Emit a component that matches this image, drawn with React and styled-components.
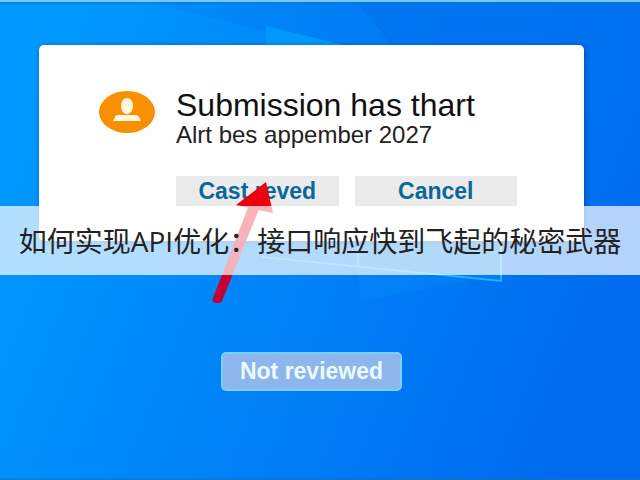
import React from 'react'
import styled, { createGlobalStyle, css } from 'styled-components'

function App() {
  return (
    <>
      <GlobalStyle />
      <Desktop>
        <Wallpaper />
        <Dialog role="dialog" aria-labelledby="dialog-title" aria-describedby="dialog-text">
          <UserIcon />
          <Content>
            <Title id="dialog-title">Submission has thart</Title>
            <Message id="dialog-text">Alrt bes appember 2027</Message>
            <Actions>
              <Button type="button">Cast reved</Button>
              <Button type="button">Cancel</Button>
            </Actions>
          </Content>
        </Dialog>
        <Button type="button" outlined>Not reviewed</Button>
        <Arrow />
        <Banner>
          <Headline>如何实现API优化：接口响应快到飞起的秘密武器</Headline>
        </Banner>
      </Desktop>
    </>
  )
}

export default App

function Wallpaper() {
  return (
    <WallpaperSvg viewBox="0 0 640 480" preserveAspectRatio="none" aria-hidden="true">
      <defs>
        <linearGradient id="sky" x1="0" y1="0.3" x2="1" y2="0.6">
          <stop offset="0" stopColor="#0099ff" />
          <stop offset="0.45" stopColor="#0084f8" />
          <stop offset="1" stopColor="#006aee" />
        </linearGradient>
        <linearGradient id="beam" x1="0" y1="0" x2="1" y2="0">
          <stop offset="0" stopColor="#0084f6" stopOpacity="0.3" />
          <stop offset="1" stopColor="#007af4" />
        </linearGradient>
      </defs>
      <rect width="640" height="480" fill="url(#sky)" />
      <path d="M140 0H355L405 55H350L266 32Z" fill="url(#beam)" />
      <path d="M355 0H640V60H405Z" fill="#0070ee" opacity="0.7" />
      <path d="M266 26L355 48H266Z" fill="#0099fb" />
      <path d="M358 240H502V281L358 266Z" fill="#0080ee" />
      <path d="M358 266L470 281L360 301Z" fill="#0890fb" opacity="0.3" />
      <path d="M262 257L501 281V240M358 240V266" fill="none" stroke="#23b4fa" strokeWidth="2" />
      <path d="M0 1H640" stroke="#72c9ff" strokeWidth="2" />
      <path d="M0 3H640M0 479H640" stroke="#1273bd" strokeWidth="1" />
    </WallpaperSvg>
  )
}

function UserIcon() {
  return (
    <Avatar viewBox="0 0 58 54" aria-hidden="true">
      <ellipse cx="29" cy="27" rx="28" ry="21" fill="#f98f03" />
      <ellipse cx="29" cy="21" rx="6" ry="8" fill="#fff7df" />
      <path d="M17 32Q17 30 20 30H38Q41 30 43 36H15Z" fill="#fff7df" />
    </Avatar>
  )
}

function Arrow() {
  return (
    <ArrowSvg viewBox="0 0 68 128" aria-hidden="true">
      <defs>
        <linearGradient id="shaft" x1="0" y1="0" x2="0" y2="1">
          <stop offset="0" stopColor="#ef000f" />
          <stop offset="1" stopColor="#bd0039" />
        </linearGradient>
      </defs>
      <path d="M45 26L55 30L18 122Q16 125 12 124Q7 123 9 119Z" fill="url(#shaft)" />
      <path d="M62 3L32 26L69 34Z" fill="#ef0010" />
    </ArrowSvg>
  )
}

const GlobalStyle = createGlobalStyle`
  * {
    box-sizing: border-box;
  }
  body {
    margin: 0;
    font-family: "Liberation Sans", Arial, sans-serif;
  }
`

const Desktop = styled.main`
  position: relative;
  display: flex;
  flex-direction: column;
  align-items: center;
  gap: 111px;
  min-height: 100vh;
  padding: 45px 56px 0 39px;
  overflow: hidden;
  background: #0084f8;
`

const WallpaperSvg = styled.svg`
  position: absolute;
  inset: 0;
  width: 100%;
  height: 100%;
`

const Dialog = styled.section`
  position: relative;
  display: flex;
  align-items: flex-start;
  gap: 20px;
  width: 100%;
  padding: 40px 67px 35px 59px;
  border-radius: 5px;
  background: #fefefe;
  box-shadow: 1px 1px 5px rgba(0, 45, 110, 0.6);
`

const Avatar = styled.svg`
  flex: none;
  width: 58px;
  height: 54px;
`

const Content = styled.div`
  flex: 1;
  min-width: 0;
`

const Title = styled.h1`
  margin: 0;
  font-size: 32px;
  font-weight: 400;
  line-height: 40px;
  white-space: nowrap;
  color: #111;
`

const Message = styled.p`
  margin: 0;
  font-size: 24px;
  line-height: 20px;
  white-space: nowrap;
  color: #222;
`

const Actions = styled.div`
  display: grid;
  grid-template-columns: 1fr 1fr;
  gap: 16px;
  margin-top: 31px;
`

const Button = styled.button.withConfig({
  shouldForwardProp: (prop) => prop !== 'outlined',
})`
  position: relative;
  height: 30px;
  padding: 0 12px;
  border: 0;
  background: #ebebeb;
  color: #08689c;
  font-family: inherit;
  font-size: 23px;
  font-weight: 700;
  white-space: nowrap;
  cursor: pointer;
  ${(props) => props.outlined && css`
    height: 39px;
    padding: 0 17px;
    border: 2px solid #77d2ff;
    border-radius: 5px;
    background: #8eb5ec;
    color: #e9fdff;
  `}
`

const ArrowSvg = styled.svg`
  position: absolute;
  top: 179px;
  left: 204px;
  width: 68px;
  height: 128px;
  overflow: visible;
  pointer-events: none;
`

const Banner = styled.header`
  position: absolute;
  top: 206px;
  left: 0;
  right: 0;
  padding: 15px 0 14px;
  background: rgba(255, 255, 255, 0.7);
  text-align: center;
`

const Headline = styled.h2`
  margin: 0;
  font-family: "Open Sans", "Noto Sans CJK SC", sans-serif;
  font-size: 28px;
  font-weight: 400;
  line-height: 40px;
  white-space: nowrap;
  color: #222;
`
